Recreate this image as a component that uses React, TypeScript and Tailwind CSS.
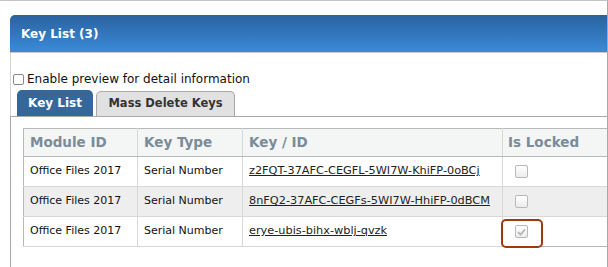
import React from "react";

const font = { fontFamily: '"DejaVu Sans", Verdana, sans-serif' };

function Box({ checked }: { checked?: boolean }) {
  return (
    <span className="inline-flex h-[13px] w-[13px] items-center justify-center rounded-[2px] border border-[#b8b8b8] bg-gradient-to-b from-[#ffffff] to-[#ececec]">
      {checked && (
        <svg width="9" height="8" viewBox="0 0 9 8">
          <path d="M1 4.2 L3.5 6.5 L8 1.5" fill="none" stroke="#b0b0b0" strokeWidth="1.6" />
        </svg>
      )}
    </span>
  );
}

const rows = [
  { key: "z2FQT-37AFC-CEGFL-5WI7W-KhiFP-0oBCj", checked: false, bg: "bg-white" },
  { key: "8nFQ2-37AFC-CEGFs-5WI7W-HhiFP-0dBCM", checked: false, bg: "bg-[#eeeeee]" },
  { key: "erye-ubis-bihx-wblj-qvzk", checked: true, bg: "bg-white" },
];

export default function App() {
  return (
    <div style={font} className="h-[267px] w-[608px] overflow-hidden border-t border-r border-t-[#c4c4c4] border-r-[#a8a8a8] bg-white">
      <div className="ml-[10px] mt-[14px]">
        <div className="flex h-[38px] items-center rounded-tl-[5px] border-b border-[#c9c9c9] bg-gradient-to-b from-[#2a62a0] to-[#3b8bd9] pl-[11px] text-[12px] font-bold text-white">
          Key List (3)
        </div>
        <div className="border-l border-[#d4d4d4]">
          <div className="flex items-center pl-[2px] pt-[19px] text-[12px] leading-[15px] text-[#111]">
            <span className="mr-[3px] inline-block h-[11px] w-[11px] rounded-[2px] border border-[#8a8a8a] bg-white" />
            Enable preview for detail information
          </div>
          <div className="flex items-end gap-[3px] pl-[6px] pt-[3px]">
            <div className="flex h-[26px] w-[76px] items-center justify-center rounded-t-[5px] bg-[#36679a] text-[12px] font-bold text-white">
              Key List
            </div>
            <div className="flex h-[25px] w-[139px] items-center justify-center rounded-t-[5px] border border-b-0 border-[#a9a9a9] bg-[#e1e1e1] text-[11.5px] font-bold text-[#333]">
              Mass Delete Keys
            </div>
          </div>
        </div>
        <div className="h-[200px] border-l border-t border-[#a9a9a9] pl-[12px] pt-[11px]">
          <table className="w-[640px] table-fixed border-collapse whitespace-nowrap text-[11px] text-[#111]">
            <colgroup>
              <col className="w-[114px]" />
              <col className="w-[105px]" />
              <col className="w-[260px]" />
              <col />
            </colgroup>
            <thead>
              <tr className="h-[28px] bg-[#f4f5f5] text-left text-[13.5px] font-bold text-[#7a8b9a]">
                <th className="border border-[#b8b8b8] border-r-[#d8d8d8] px-[6px] font-bold">Module ID</th>
                <th className="border border-[#b8b8b8] border-r-[#d8d8d8] px-[6px] font-bold">Key Type</th>
                <th className="border border-[#b8b8b8] border-r-[#d8d8d8] px-[6px] font-bold">Key / ID</th>
                <th className="border border-[#b8b8b8] px-[5px] font-bold">Is Locked</th>
              </tr>
            </thead>
            <tbody>
              {rows.map((r, i) => (
                <tr key={i} className={`h-[30px] ${r.bg}`}>
                  <td className="border-x border-b border-[#d8d8d8] border-l-[#b8b8b8] px-[6px]">Office Files 2017</td>
                  <td className="border-x border-b border-[#d8d8d8] px-[6px]">Serial Number</td>
                  <td className="border-x border-b border-[#d8d8d8] px-[6px]">
                    <span className="text-[11.3px] text-[#222] underline">{r.key}</span>
                  </td>
                  <td className={`relative border-x border-b border-[#d8d8d8] px-[12px] ${i === 2 ? "border-b-[#b8b8b8]" : ""}`}>
                    <div className="flex items-center">
                      <Box checked={r.checked} />
                    </div>
                    {i === 2 && (
                      <span className="absolute left-[-2px] top-[2px] h-[29px] w-[42px] rounded-[5px] border-2 border-[#9a3b12]" />
                    )}
                  </td>
                </tr>
              ))}
            </tbody>
          </table>
        </div>
      </div>
    </div>
  );
}
